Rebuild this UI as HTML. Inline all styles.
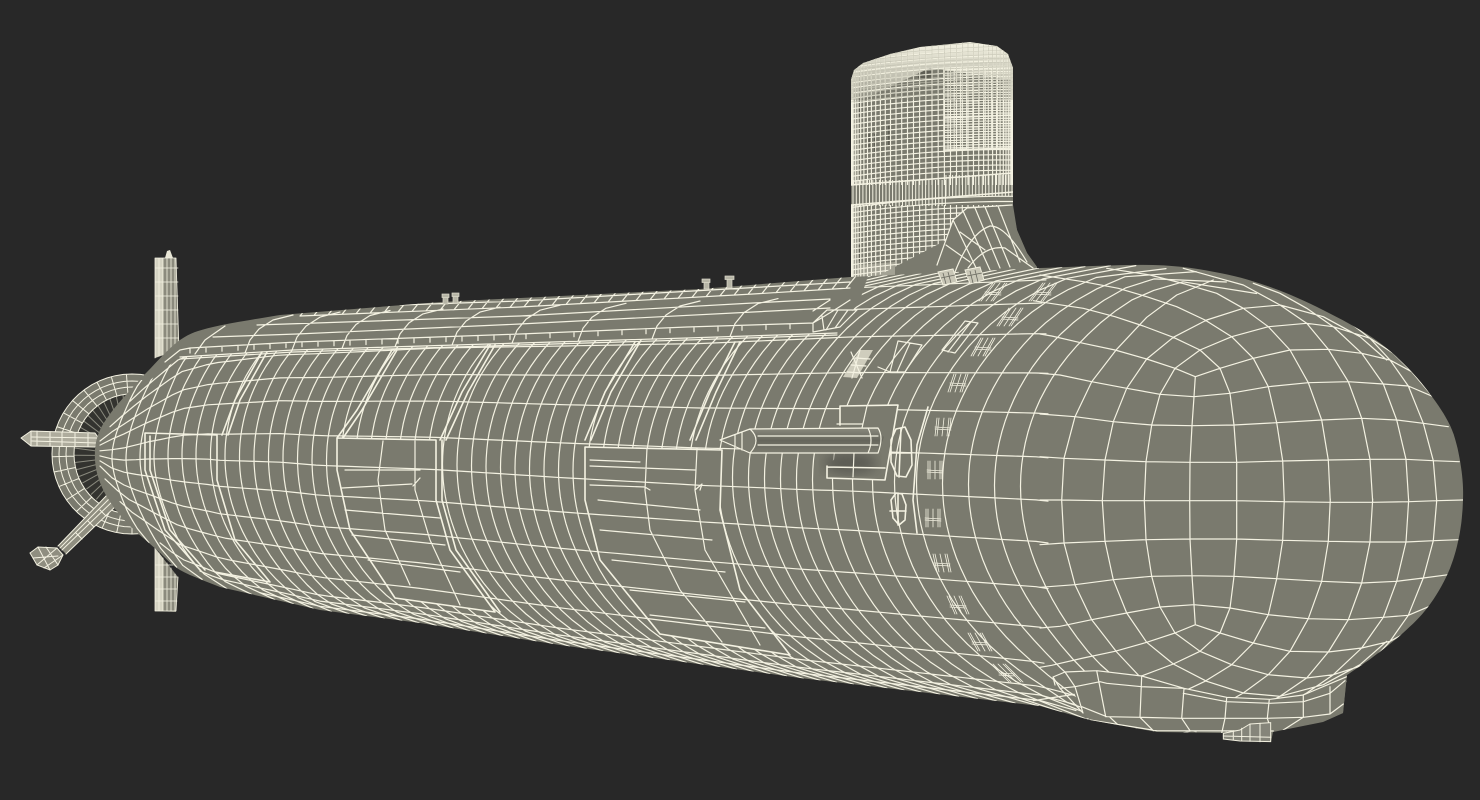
<!DOCTYPE html>
<html><head><meta charset="utf-8"><style>
html,body{margin:0;padding:0;background:#282828;width:1480px;height:800px;overflow:hidden}
svg{display:block}
.l{fill:none;stroke:#f4f2e2;stroke-width:1.2;stroke-linejoin:round;stroke-linecap:round}
.t{fill:none;stroke:#f4f2e2;stroke-width:1.6;stroke-linejoin:round;stroke-linecap:round}
</style></head><body>
<svg xmlns="http://www.w3.org/2000/svg" width="1480" height="800" viewBox="0 0 1480 800">
<defs>
<clipPath id="hull"><polygon id="hullp" points="96,450 1463,500 1040,706"/></clipPath>
<clipPath id="deck"><polygon points="0,800 0,380 150,380 180,357 293,350 520,343 687,338 837,333 860,300 880,240 1480,240 1480,800"/></clipPath>
<clipPath id="tw"><polygon points="851,278 851,80 854,70 863,63 890,54 920,47 970,42 997,46 1008,54 1013,68 1013,205 851,290"/></clipPath>
<linearGradient id="dome" x1="0" y1="0" x2="0" y2="1"><stop offset="0" stop-color="#f6f4e4"/><stop offset=".55" stop-color="#f0eedd" stop-opacity=".6"/><stop offset="1" stop-color="#eeecdc" stop-opacity="0"/></linearGradient>
<linearGradient id="tube" x1="0" y1="0" x2="0" y2="1"><stop offset="0" stop-color="#8a8a7e"/><stop offset=".5" stop-color="#66665c"/><stop offset="1" stop-color="#7c7c70"/></linearGradient>
<filter id="bl"><feGaussianBlur stdDeviation="6"/></filter>
</defs>
<rect width="1480" height="800" fill="#282828"/>

<!-- fins -->
<polygon points="155,258 176,258 179,350 155,358" fill="#8b8a7d"/>
<polygon points="155,258 163,258 163,355 155,358" fill="#d5d3c3"/>
<polygon points="165,258 167,251 170,250 173,258" fill="#e8e6d6"/>
<polygon points="155,548 178,577 176,612 155,611" fill="#8b8a7d"/>
<polygon points="155,548 163,558 163,611 155,611" fill="#d5d3c3"/>
<path id="fins" class="l" style="stroke-width:.8"/>

<!-- duct -->
<ellipse cx="132" cy="452" rx="60" ry="62" fill="#33332f"/>
<path id="blades" fill="none" stroke="#8a8a7e" stroke-width="1"/>
<path d="M132 372a80 80 0 1 0 .01 0ZM132 392a58 60 0 1 1 -.01 0Z" fill="#7a7a6e" fill-rule="evenodd" transform="translate(0,2)"/>
<path id="duct" class="l" style="stroke-width:1"/>

<!-- rods -->
<polygon points="108,494 118,504 66,554 58,546" fill="#8f8e80"/>
<path class="l" style="stroke-width:1" d="M108 494L58 546M111 497L60 548M114 500L62 550M118 504L66 554M100 510l6 6M88 521l6 6M76 533l6 6"/>
<polygon points="30,553 38,547 57,548 63,555 58,565 50,570 37,565" fill="#8f8e80" stroke="#f2f0df"/>
<path class="l" style="stroke-width:1" d="M38 547L50 570M46 547L58 565M57 548L37 565M63 555L44 568M33 558L58 556"/>
<polygon points="21,438 31,431 95,433 100,440 95,447 31,446" fill="#aeac9d"/>
<path class="l" style="stroke-width:1" d="M21 438L31 431L95 433L100 440L95 447L31 446ZM32 437L97 438M32 441L97 443M31 431V446M37 431V446M50 432V446M62 432V446M75 433V446M88 433V446"/>

<!-- tower -->
<polygon points="851,278 851,80 854,70 863,63 890,54 920,47 970,42 997,46 1008,54 1013,68 1013,205 1017,230 1027,253 1037,267 1037,285 851,285" fill="#7a7a6e"/>
<g clip-path="url(#tw)">
<g fill="#5e5e54"><rect x="918" y="69" width="14" height="11"/><rect x="858" y="97" width="3" height="22"/><rect x="867" y="134" width="3" height="16"/><rect x="874" y="134" width="3" height="18"/><rect x="888" y="125" width="3" height="20"/><rect x="858" y="245" width="3" height="16"/></g>
<path id="towerV" fill="none" stroke="#f4f2e2" stroke-width="1.15"/>
<path id="towerH" fill="none" stroke="#f4f2e2" stroke-width="1.15"/>
<path id="towerW" fill="none" stroke="#f4f2e2" stroke-width="1"/>
<path class="t" d="M851 185L1013 173M851 205L1013 192M944 68V152M944 118L1013 115M944 150L1013 148M944 70L1013 68"/>
<polygon points="851,80 854,70 863,63 890,54 920,47 970,42 997,46 1008,54 1013,68 1013,80 930,68 851,105" fill="url(#dome)"/>
<path id="domeG" fill="none" stroke="#c4c3b3" stroke-width=".6"/>
</g>
<polygon points="858,265 895,262 895,278 858,280" fill="#f0eedd" opacity=".35"/>
<!-- fairing -->
<polygon points="937,265 953,220 967,208 1012,205 1017,230 1027,253 1037,267 1037,285 937,285" fill="#7a7a6e"/>
<path class="l" d="M937 265L953 220L967 208L1012 205M953 220L978 272M963 211L990 270M975 208L1000 268M985 207L1010 267M998 206L1020 262M955 272Q970 233 990 226Q1005 225 1027 262M968 268Q985 245 1005 248L1033 268M946 245L970 262M960 232L985 250"/>

<!-- hull -->
<g clip-path="url(#hull)">
<rect x="80" y="250" width="1400" height="500" fill="#7a7a6e"/>
<ellipse cx="1200" cy="710" rx="120" ry="16" fill="#6c6c61" opacity=".5" filter="url(#bl)"/>
<g clip-path="url(#deck)"><path id="rings" class="l"/></g>
<polygon points="337,438 436,440 436,500 450,550 495,612 395,598 350,530 337,470" fill="#7a7a6e"/>
<polygon points="585,447 722,450 720,510 740,590 790,655 660,634 600,560 585,500" fill="#7a7a6e"/>
<g clip-path="url(#deck)"><path id="longs" class="l"/></g>
<path id="nose" class="l"/>
<polygon id="keelc" fill="#7a7a6e"/>
<path id="keel" class="l"/>
<path id="deckl" class="l"/>
<polygon points="840,406 898,405 885,480 827,478 827,466 838,456 838,425" fill="#7a7a6e"/>
<ellipse cx="850" cy="463" rx="26" ry="11" fill="#50504a" opacity=".7" filter="url(#bl)"/>
<polygon points="720,440 750,429 878,428 884,437 878,453 750,453" fill="url(#tube)"/>
<polygon points="720,440 750,429 757,441 750,453" fill="#7c7c70"/>
<polygon points="843,377 860,350 873,350 857,378" fill="#cfcdbd"/>
<path id="det" class="l"/>
<path id="lads" class="l" style="stroke-width:.8"/>
<path class="t" id="thick"/>
</g>
<polygon id="bump" fill="#85857a" stroke="#f2f0df" stroke-width="1"/>
<path id="bumpl" class="l" style="stroke-width:1"/>
<!-- fittings -->
<g fill="#b6b5a6" stroke="#dedccc" stroke-width=".7">
<rect x="443" y="297" width="5" height="7"/><rect x="442" y="294" width="7" height="3.5"/>
<rect x="453" y="296" width="5" height="7"/><rect x="452" y="293" width="7" height="3.5"/>
<rect x="704" y="282" width="5" height="7"/><rect x="702" y="279" width="8" height="3.5"/>
<rect x="727" y="279" width="5" height="9"/><rect x="725" y="276" width="9" height="3.5"/>
</g>
<polygon points="938,272 953,269 957,282 943,285" fill="#c9c7b7" stroke="#f2f0df"/><polygon points="965,270 980,267 984,280 970,284" fill="#c9c7b7" stroke="#f2f0df"/>
<path fill="none" stroke="#6a6a60" stroke-width=".8" d="M943 273l3 11M948 272l3 11M941 278l14-3M970 271l3 12M975 270l3 12M967 276l15-3"/>
</svg>
<script>
const P=a=>'M'+a.map(p=>p[0].toFixed(1)+' '+p[1].toFixed(1)).join('L');
const CR=a=>{const o=[];for(let i=0;i<a.length-1;i++){const p0=a[Math.max(0,i-1)],p1=a[i],p2=a[i+1],p3=a[Math.min(a.length-1,i+2)];for(let k=0;k<8;k++){const s=k/8,s2=s*s,s3=s2*s;o.push([0,1].map(j=>.5*(2*p1[j]+(p2[j]-p0[j])*s+(2*p0[j]-5*p1[j]+4*p2[j]-p3[j])*s2+(3*p1[j]-p0[j]-3*p2[j]+p3[j])*s3)));}}o.push(a[a.length-1]);return o;};
const tail=[[220,587],[180,570],[157,550],[127,523],[107,497],[97,473],[95,450],[100,430],[113,410],[133,387],[147,372],[180,340],[213,327],[280,315]];
const noseS=[[1040,268],[1153,265],[1220,273],[1273,288],[1323,310],[1373,338],[1407,367],[1433,398],[1452,430],[1461,467],[1463,500],[1459,537],[1448,573],[1428,607],[1403,633],[1373,657],[1347,675]];
const hullPts=[...CR(tail),[440,302],[700,289],[850,277],...CR(noseS),[1343,713],[1323,722],[1273,732],[1271,742],[1223,739],[1223,733],[1157,732],[1090,720],[1040,706],[800,678],[560,645],[420,623],[320,610]];
document.getElementById('hullp').setAttribute('points',hullPts.map(p=>p[0].toFixed(1)+','+p[1].toFixed(1)).join(' '));
const T=[[95,450],[100,430],[113,410],[133,387],[147,372],[180,340],[213,327],[280,315],[440,302],[700,289],[850,277],[1040,268],[1130,265],[1200,272],[1300,310]];
const B=[[95,450],[97,473],[107,497],[127,523],[157,550],[180,570],[220,587],[320,610],[420,623],[560,645],[800,678],[1040,706],[1090,720],[1180,732],[1300,730]];
const I=(A,x)=>{if(x<=A[0][0])return A[0][1];for(let i=1;i<A.length;i++)if(x<=A[i][0]){const f=(x-A[i-1][0])/(A[i][0]-A[i-1][0]);return A[i-1][1]+f*(A[i][1]-A[i-1][1]);}return A[A.length-1][1];};
const cy=x=>(I(T,x)+I(B,x))/2, bb=x=>(I(B,x)-I(T,x))/2;
const $=id=>document.getElementById(id);
// rings
let d='';let xm=112;
while(xm<1045){const b0=bb(xm),k=.8+.3*Math.max(0,(xm-200))/860,A=b0*k;const pts=[];
 for(let t=-1;t<=1.001;t+=.05){const s=A*(1-Math.sqrt(Math.max(0,1-t*t)));const x=xm+s;pts.push([x,cy(x)+t*bb(x)]);}
 d+=P(pts);
 xm+= xm<190?14: xm<720?14.5: xm<800?16: xm<860?20: xm<915?22:26;}
$('rings').setAttribute('d',d);
// longitudes
d='';for(const [t0,t1,sx] of [[-.95,-.945,170],[-.84,-.84,130],[-.72,-.7,110],[-.56,-.52,100],[-.4,-.336,100],[-.17,-.137,100],[.03,.06,100],[.23,.25,100],[.44,.457,100],[.62,.64,105],[.78,.8,120],[.9,.91,160],[.94,.95,200],[.975,.975,260]]){const p=[];for(let x=sx;x<=(t1>.85?1085:1050);x+=12){const f=Math.min(1,Math.max(0,(x-300)/750));const t=t0+(t1-t0)*f;p.push([x,cy(x)+t*bb(x)]);}d+=P(p);}
$('longs').setAttribute('d',d);
// nose
const Z=p=>[p[0]/3+1040,p[1]/3+260];
const N=[
[[65,722],[72,595],[105,470],[155,365],[230,268],[320,172],[410,105],[520,60]],
[[187,722],[195,600],[220,485],[260,385],[320,297],[400,232],[500,180],[610,145],[720,135],[850,170],[960,230],[1040,300]],
[[313,722],[318,605],[335,495],[360,403],[405,325],[480,270],[575,230],[685,200],[800,190],[880,200],[990,235],[1060,280],[1110,330]],
[[449,722],[450,607],[456,497],[462,410],[466,350]],
[[590,722],[590,607],[582,495],[570,400],[540,325],[480,270],[400,232],[310,198],[225,170],[130,145],[30,130],[-20,122]],
[[733,725],[728,603],[710,488],[685,380],[640,295],[575,230],[495,180],[410,140],[320,110],[235,85],[130,65],[0,45]],
[[871,727],[865,600],[845,480],[805,368],[750,270],[685,200],[610,145],[530,100],[435,72],[330,45],[200,25]],
[[998,727],[990,598],[965,475],[925,365],[865,268],[800,190],[720,135],[610,75],[520,50],[430,25]],
[[1106,725],[1098,598],[1070,480],[1030,372],[965,280],[880,200],[800,145],[720,100],[640,70]],
[[1190,722],[1180,602],[1150,490],[1105,378],[1050,300],[990,235],[900,165],[820,125]],
[[0,590],[72,595],[195,600],[318,605],[450,607],[590,607],[728,603],[865,600],[990,598],[1098,598],[1180,602],[1258,605]],
[[0,462],[105,470],[220,485],[335,495],[456,497],[582,495],[710,488],[845,480],[965,475],[1070,480],[1150,490],[1225,500]],
[[0,340],[60,345],[155,365],[260,385],[360,403],[462,410],[570,400],[685,380],[805,368],[925,365],[1030,372],[1105,378],[1180,410]],
[[466,350],[405,325],[320,297],[225,270],[130,250],[35,228],[0,222]],
[[466,350],[540,325],[640,295],[750,270],[865,268],[965,280],[1050,300],[1115,335],[1170,400]]];
d='';for(const l of N){d+=P(l.map(Z));d+=P(l.map(p=>Z([p[0],1444-p[1]])));}
d+=P([[0,720],[65,720],[187,722],[313,722],[449,722],[590,722],[733,725],[871,727],[998,727],[1106,725],[1190,722],[1268,720]].map(Z));
$('nose').setAttribute('d',d);
// keel
const kc=[[170,1232],[305,1248],[432,1285],[560,1312],[690,1318],[790,1305],[920,1250],[910,1360],[850,1385],[700,1415],[350,1415],[150,1380],[129,1359],[75,1236]];
$('keelc').setAttribute('points',kc.map(Z).map(p=>p.join(',')).join(' '));
const K=[kc.slice(0,7),[[125,1340],[200,1370],[300,1372],[425,1375],[555,1375],[680,1375],[790,1372],[870,1362],[910,1332]],[[180,1265],[200,1270],[305,1280],[430,1285]],[[430,1300],[560,1325],[690,1330],[790,1325],[870,1300],[915,1262]],
[[170,1232],[197,1370]],[[305,1248],[300,1372],[340,1412]],[[432,1285],[425,1375],[450,1412]],[[560,1312],[555,1375],[545,1420]],[[688,1318],[682,1375],[690,1400]],[[790,1305],[790,1372],[730,1410]],[[870,1280],[870,1362]],[[210,1372],[240,1400]],
[[170,1232],[75,1236],[39,1251],[45,1275]],[[39,1251],[60,1285],[105,1280],[180,1265]],[[75,1236],[105,1280],[129,1359]],[[60,1285],[129,1359]],[[150,1380],[350,1412],[700,1413]]];
$('keel').setAttribute('d',K.map(l=>P(l.map(Z))).join(''));
const bu=[[550,1420],[600,1410],[630,1392],[692,1388],[692,1445],[600,1443],[550,1437]].map(Z);
$('bump').setAttribute('points',bu.map(p=>p.join(',')).join(' '));
$('bumpl').setAttribute('d',[[[580,1412],[580,1440]],[[605,1405],[605,1443]],[[630,1392],[630,1444]],[[660,1390],[660,1445]],[[550,1428],[692,1432]]].map(l=>P(l.map(Z))).join(''));
// deck
const LD=[[180,357],[293,350],[520,343],[687,338],[837,333]];
const TK=[[190,348],[297,342],[520,334],[687,327],[813,323]];
const L5=[[300,316],[520,307],[753,294],[850,288]];
d=P(LD)+P(LD.map(p=>[p[0],p[1]+2]))+P(TK);
d+=P([[213,337],[297,334],[520,324],[753,312],[830,308]])+P([[257,325],[520,316],[753,303],[830,299]])+P(L5)+P([[400,305],[520,301],[640,294],[850,282]]);
d+=P([[165,362],[180,350],[190,348]]);
for(const xb of [245,292,342,395,452,512,578,652,730]){const y=I(LD,xb);d+=P([[xb,y],[xb+5,y-13],[xb+14,y-24],[xb+28,y-33],[xb+48,y-38]]);}
d+=P([[195,354],[205,340],[225,326]]);
for(let x=190;x<813;x+=(x<520?16:24)){const y=I(TK,x);d+=`M${x} ${y.toFixed(1)}v5`;}
for(let x=300;x<850;x+=14){const y=I(L5,x);d+=`M${x} ${y.toFixed(1)}l13 -16`;}
d+='M813 323L827 310L857 310L840 327L813 332ZM822 316L824 330M838 310L826 330M848 310L835 328M850 300Q835 310 813 323M813 311L830 300';
$('deckl').setAttribute('d',d);
// ladders
let dl='';
const lad=(x,y,s)=>{for(const o of [-7,-5,0,5,7]){dl+=`M${x+o+s} ${y-9}L${x+o-s} ${y+9}`;}dl+=`M${x-8} ${y}L${x+8} ${y+1}M${x-8} ${y+2}L${x+8} ${y+3}`;};
lad(993,292,7);lad(1043,292,7);lad(1010,317,6);lad(983,347,5);lad(958,383,3);lad(943,427,1);lad(935,470,0);lad(933,518,0);lad(942,563,-2);lad(958,605,-4);lad(980,642,-5);lad(1007,673,-9);
$('lads').setAttribute('d',dl);
// details
d='';
// hatch interiors
d+='M383 441L378 480L385 530L410 585M415 441V490L430 540L460 605M345 470H420M342 488L412 484M420 478L413 486M345 510L440 518M352 535L445 545M368 560L460 572';
d+='M647 448L645 490L650 530L680 590L722 642M697 449L695 490L705 550L760 645M590 466L695 470M590 485L645 487L650 490M598 500L700 510M600 530L712 540M612 560L725 572M630 590L745 602M650 615L765 628M695 490L702 484L700 490';
d+='M590 460L640 462';
// tube
d+='M720 440L750 429L878 428Q884 437 878 453L750 453L720 440M750 429Q762 440 750 453M878 436H758M878 445H758M735 435V447M742 432V450M868 428Q874 440 868 453';
d+='M847 372L862 373M851 365L866 366M855 358L870 359M851 352L862 378M860 350L852 378';
d+='M878 367L890 372H905L922 345L898 341L890 372M897 372L910 343M942 350L955 353L978 323L965 321L942 350M948 352L971 322';
d+='M837 424L863 424M867 406L862 428M854 453L853 477';
$('det').setAttribute('d',d);
// thick bands
$('thick').setAttribute('d',
'M145 433L217 435M145 433V470L165 530L200 570M217 435V480L235 540L270 582M215 572L270 582M150 436V470L170 530L205 570'+
'M337 438L436 440M337 438V470L350 530L395 598M436 440V500L450 550L495 612M395 598L495 612M442 440V500L456 550L500 612'+
'M585 447L722 450M585 447V500L600 560L660 634M722 450L720 510L740 590L790 655M660 634L790 655'+
'M222 435L235 400L262 352M228 435L240 400L267 352M337 438L357 410L392 350M343 438L362 410L397 350M440 440L462 392L490 345M446 440L468 392L495 345M585 440L605 392L635 342M591 440L611 392L640 342M690 440L710 392L735 342M696 440L716 392L740 342'+
'M840 406L898 405L885 480L827 478M827 467L885 468M840 406V425M827 466V478'+
'M891 440L896 429L905 427L911 440L912 465L906 477L897 476L891 462ZM891 453H911M901 428L899 477M891 500L896 493L902 494L906 505L905 520L899 525L893 518ZM890 511H906M898 493V525'+
'M928 407L917 445L913 500L917 533');
// tower
d='';for(let a=-88;a<=88;a+=4.4){const x=932+81*Math.sin(a*Math.PI/180);d+=`M${x.toFixed(1)} 40V185M${x.toFixed(1)} 205V285`;}
$('towerV').setAttribute('d',d);
let dg='';for(let a=-88;a<=88;a+=4.4){const x=932+81*Math.sin(a*Math.PI/180);dg+=`M${x.toFixed(1)} 40V100`;}
for(let y=44;y<100;y+=4){dg+=`M851 ${y+6}Q930 ${y-4} 1013 ${y-6}`;}
$('domeG').setAttribute('d',dg);
d='';for(let y=62;y<290;y+=5.2){if(y>184&&y<205)continue;const p=[];for(let x=851;x<=1013;x+=18){const u=(x-932)/81;p.push([x,y-(x-851)*.07+ (1-u*u)*-3]);}d+=P(p);}
$('towerH').setAttribute('d',d);
d='';for(let y=70;y<150;y+=5.2){d+=`M944 ${y.toFixed(1)}L1013 ${(y-1.5).toFixed(1)}`;}
for(let x=946;x<1013;x+=3.3){d+=`M${x.toFixed(1)} 175V196`;}
for(let x=853;x<946;x+=3.3){d+=`M${x.toFixed(1)} 180V206`;}
for(let x=946;x<1013;x+=6.2){d+=`M${(x+2).toFixed(1)} 68V150`;}
$('towerW').setAttribute('d',d);
// fins
d='M159 258V356M163 258V356M167 258V354M171 258V352M175 258V350';for(let y=268;y<350;y+=14)d+=`M155 ${y}L178 ${y}`;
d+='M159 553V611M163 558V611M167 563V611M171 568V611M175 574V611';for(let y=565;y<612;y+=12)d+=`M155 ${y}L177 ${y}`;
d+='M155 258H176L179 350M155 258V358M155 548V611H176L178 577';
$('fins').setAttribute('d',d);
// duct
d='';const E=(rx,ry)=>{const p=[];for(let a=0;a<=360;a+=6){const r=a*Math.PI/180;p.push([132+rx*Math.cos(r),454+ry*Math.sin(r)]);}return P(p);};
d+=E(80,80)+E(73,73)+E(66,67)+E(58,60);
for(let a=90;a<=270;a+=11){const r=a*Math.PI/180;d+=`M${132+58*Math.cos(r)} ${454+60*Math.sin(r)}L${132+80*Math.cos(r)} ${454+80*Math.sin(r)}`;}
$('duct').setAttribute('d',d);
d='';for(let a=100;a<=260;a+=7){const r=a*Math.PI/180;d+=`M${132+20*Math.cos(r)} ${452+20*Math.sin(r)}L${132+58*Math.cos(r+.12)} ${452+60*Math.sin(r+.12)}`;}
$('blades').setAttribute('d',d);
</script>
</body></html>
